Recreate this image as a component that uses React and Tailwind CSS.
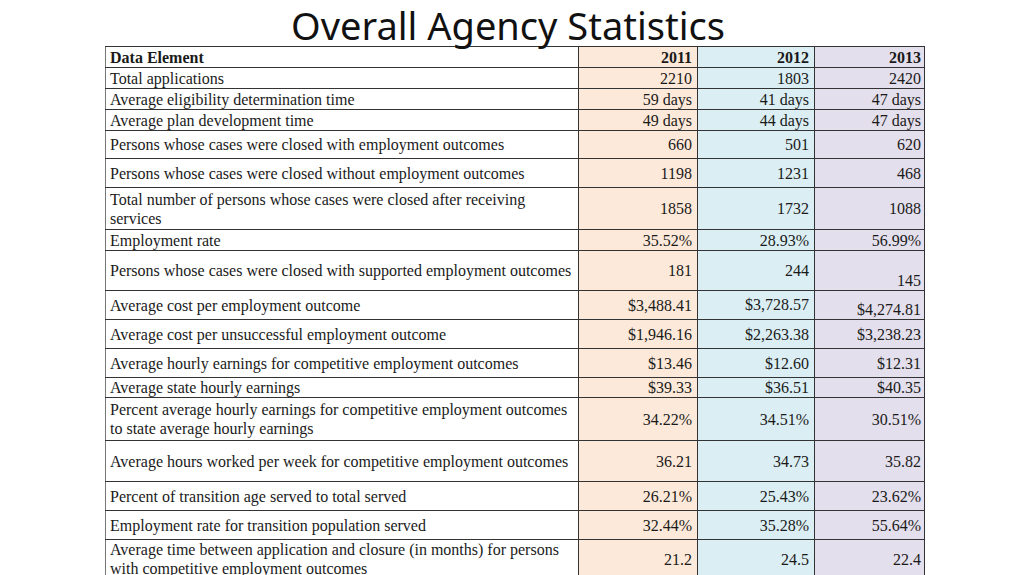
import React from "react";

// ─── Table data ───
const rows = [
  { label: "Total applications", h: "h-[21px]", v: ["2210", "1803", "2420"], lift: true },
  { label: "Average eligibility determination time", h: "h-[21px]", v: ["59 days", "41 days", "47 days"], lift: true },
  { label: "Average plan development time", h: "h-[21px]", v: ["49 days", "44 days", "47 days"], lift: true },
  { label: "Persons whose cases were closed with employment outcomes", h: "h-[28px]", v: ["660", "501", "620"] },
  { label: "Persons whose cases were closed without employment outcomes", h: "h-[29px]", v: ["1198", "1231", "468"] },
  { label: "Total number of persons whose cases were closed after receiving services", h: "h-[42px]", v: ["1858", "1732", "1088"] },
  { label: "Employment rate", h: "h-[21px]", v: ["35.52%", "28.93%", "56.99%"], lift: true },
  { label: "Persons whose cases were closed with supported employment outcomes", h: "h-[40px]", v: ["181", "244", "145"], bottom: true },
  { label: "Average cost per employment outcome", h: "h-[29px]", v: ["$3,488.41", "$3,728.57", "$4,274.81"], bottom: true, nudge: true },
  { label: "Average cost per unsuccessful employment outcome", h: "h-[29px]", v: ["$1,946.16", "$2,263.38", "$3,238.23"] },
  { label: "Average hourly earnings for competitive employment outcomes", h: "h-[29px]", v: ["$13.46", "$12.60", "$12.31"] },
  { label: "Average state hourly earnings", h: "h-[20px]", v: ["$39.33", "$36.51", "$40.35"] },
  { label: "Percent average hourly earnings for competitive employment outcomes to state average hourly earnings", h: "h-[43px]", v: ["34.22%", "34.51%", "30.51%"] },
  { label: "Average hours worked per week for competitive employment outcomes", h: "h-[41px]", v: ["36.21", "34.73", "35.82"] },
  { label: "Percent of transition age served to total served", h: "h-[29px]", v: ["26.21%", "25.43%", "23.62%"] },
  { label: "Employment rate for transition population served", h: "h-[29px]", v: ["32.44%", "35.28%", "55.64%"] },
  { label: "Average time between application and closure (in months) for persons with competitive employment outcomes", h: "h-[38px]", v: ["21.2", "24.5", "22.4"] },
];

const colBg = ["bg-[#fde9d9]", "bg-[#daeef3]", "bg-[#e4dfec]"];

export default function App() {
  return (
    <div className="w-[1024px] h-[575px] overflow-hidden bg-white text-black">
      {/* Title */}
      <div className="h-[46px] flex items-start justify-center pr-[8px]">
        <h1 className="text-[38px] leading-[42px] font-['Noto_Sans',sans-serif] text-[#111] mt-[4px]">
          Overall Agency Statistics
        </h1>
      </div>

      {/* Stats table */}
      <table className="ml-[105px] w-[819px] table-fixed border-collapse font-['Liberation_Serif',serif] text-[16px] leading-[19px] text-[#1a1a1a]">
        <colgroup>
          <col className="w-[473px]" />
          <col className="w-[119px]" />
          <col className="w-[117px]" />
          <col className="w-[110px]" />
        </colgroup>
        <thead>
          <tr className="h-[21px]">
            <th className="border border-[#333] border-l-[#777] px-[4px] text-left font-bold align-middle">Data Element</th>
            <th className={`border border-[#333] pr-[5px] text-right font-bold align-middle ${colBg[0]}`}>2011</th>
            <th className={`border border-[#333] pr-[5px] text-right font-bold align-middle ${colBg[1]}`}>2012</th>
            <th className={`border border-[#333] pr-[3px] text-right font-bold align-middle pt-[1px] ${colBg[2]}`}>2013</th>
          </tr>
        </thead>
        <tbody>
          {rows.map((r, i) => (
            <tr key={i} className={r.h}>
              <td className="border border-[#333] border-l-[#777] px-[4px] align-middle">{r.label}</td>
              <td className={`border border-[#333] pr-[5px] text-right align-middle ${colBg[0]}`}>{r.v[0]}</td>
              <td className={`border border-[#333] pr-[5px] text-right align-middle ${r.nudge ? "pb-[2px]" : ""} ${colBg[1]}`}>{r.v[1]}</td>
              <td
                className={`border border-[#333] pr-[3px] text-right ${
                  r.bottom ? "align-bottom" : "align-middle"
                } ${r.lift ? "pt-[1px]" : ""} ${colBg[2]}`}
              >
                {r.v[2]}
              </td>
            </tr>
          ))}
        </tbody>
      </table>
    </div>
  );
}
